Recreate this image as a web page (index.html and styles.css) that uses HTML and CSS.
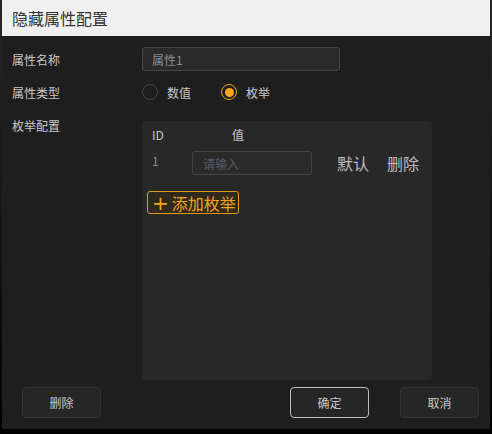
FILE: index.html
```html
<!DOCTYPE html>
<html lang="zh">

<head>
  <meta charset="UTF-8">
  <title>隐藏属性配置</title>
  <link rel="stylesheet" href="styles.css">
</head>

<body>
  <div class="dialog">
    <div class="dialog-title">隐藏属性配置</div>

    <div class="dialog-body">
      <div class="form-row">
        <label class="form-label">属性名称</label>
        <input class="text-input name-input" type="text" value="属性1">
      </div>

      <div class="form-row">
        <label class="form-label">属性类型</label>
        <div class="radio-group">
          <span class="radio"><i class="radio-dot"></i>数值</span>
          <span class="radio checked"><i class="radio-dot"></i>枚举</span>
        </div>
      </div>

      <div class="form-row enum-row">
        <label class="form-label enum-label">枚举配置</label>
        <div class="enum-panel">
          <div class="enum-head">
            <span class="col-id">ID</span>
            <span class="col-value">值</span>
          </div>
          <div class="enum-item">
            <span class="col-id item-id">1</span>
            <input class="text-input value-input" type="text" placeholder="请输入">
            <span class="link">默认</span>
            <span class="link">删除</span>
          </div>
          <button class="add-btn"><span class="plus">+</span>添加枚举</button>
        </div>
      </div>
    </div>

    <div class="dialog-footer">
      <button class="btn">删除</button>
      <button class="btn btn-primary">确定</button>
      <button class="btn">取消</button>
    </div>
  </div>
</body>

</html>
```

FILE: styles.css
```css
html,
body {
  margin: 0;
  height: 100%;
  background: linear-gradient(#2a2522, #141110 60%, #000);
  font-family: "Noto Sans CJK SC", "Noto Sans", sans-serif;
}

.dialog {
  width: 488px;
  height: 429px;
  margin-left: 2px;
  background: #1e1e1e;
  display: flex;
  flex-direction: column;
}

.dialog-title {
  height: 36px;
  line-height: 36px;
  padding-left: 10px;
  background: #f0f0f0;
  color: #333;
  font-size: 16px;
}

.dialog-body {
  flex: 1;
  padding: 11px 0 0 10px;
}

.form-row {
  display: flex;
  align-items: center;
  margin-bottom: 9px;
}

.form-label {
  width: 130px;
  color: #c8c8c8;
  font-size: 12px;
}

.text-input {
  box-sizing: border-box;
  height: 24px;
  padding: 0 9px;
  background: #2a2a2a;
  border: 1px solid #454545;
  border-radius: 3px;
  color: #8c8c8c;
  font: 12px "Noto Sans CJK SC", sans-serif;
  outline: none;
}

.text-input::placeholder {
  color: #555a66;
}

.name-input {
  width: 198px;
}

.radio-group {
  display: flex;
  height: 24px;
  align-items: center;
}

.radio {
  display: flex;
  align-items: center;
  color: #c8c8c8;
  font-size: 12px;
  margin-right: 30px;
}

.radio-dot {
  box-sizing: border-box;
  width: 16px;
  height: 16px;
  margin-right: 9px;
  border: 1px solid #444;
  border-radius: 50%;
  display: flex;
  align-items: center;
  justify-content: center;
}

.radio.checked .radio-dot {
  border-color: #f2a516;
}

.radio.checked .radio-dot::after {
  content: "";
  width: 9px;
  height: 9px;
  border-radius: 50%;
  background: #f8a81a;
}

.enum-row {
  align-items: flex-start;
  margin-top: 17px;
  margin-bottom: 0;
}

.enum-label {
  line-height: 12px;
  margin-top: -1px;
}

.enum-panel {
  box-sizing: border-box;
  width: 290px;
  height: 259px;
  padding: 7px 0 0 10px;
  background: #282828;
  border-radius: 4px;
}

.enum-head {
  display: flex;
  height: 14px;
  line-height: 14px;
  color: #c8c8c8;
  font-size: 12px;
}

.col-id {
  width: 40px;
}

.col-value {
  padding-left: 40px;
}

.enum-item {
  display: flex;
  align-items: center;
  margin-top: 9px;
}

.item-id {
  align-self: flex-start;
  margin-top: 1px;
  color: #8c8c8c;
  font-size: 12px;
}

.value-input {
  width: 120px;
  padding-left: 10px;
}

.link {
  margin-left: 25px;
  color: #bdbdbd;
  font-size: 16px;
}

.link + .link {
  margin-left: 18px;
}

.add-btn {
  box-sizing: border-box;
  width: 92px;
  height: 23px;
  margin: 16px 0 0 -5px;
  padding: 0 0 0 4px;
  display: flex;
  align-items: center;
  background: #302a1e;
  border: 1px solid #e29b17;
  border-radius: 3px;
  color: #f2a516;
  font: 16px "Noto Sans CJK SC", sans-serif;
}

.plus {
  font: 20px "DejaVu Sans", sans-serif;
  line-height: 20px;
  margin-right: 3px;
}

.dialog-footer {
  display: flex;
  padding: 7px 11px 11px 20px;
}

.btn {
  width: 79px;
  height: 31px;
  background: #262626;
  border: 1px solid #333;
  border-radius: 4px;
  color: #c8c8c8;
  font: 12px "Noto Sans CJK SC", sans-serif;
}

.btn-primary {
  margin-left: auto;
  margin-right: 31px;
  border-color: #bdbdbd;
}
```
